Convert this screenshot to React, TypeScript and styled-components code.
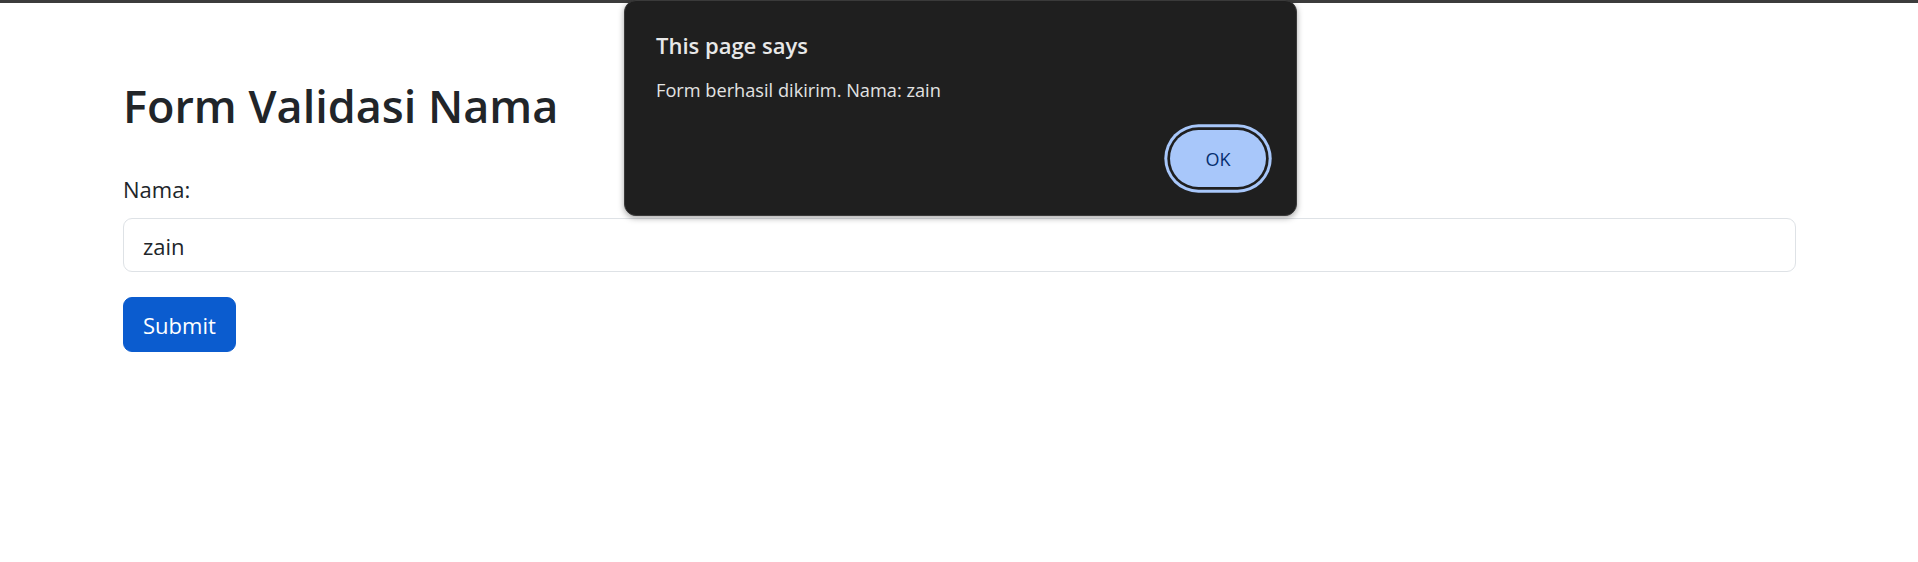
import styled, { createGlobalStyle } from "styled-components";

const GlobalStyle = createGlobalStyle`
  html, body {
    margin: 0;
    padding: 0;
    background: #ffffff;
  }
  body {
    font-family: "Open Sans", "Liberation Sans", sans-serif;
    color: #212529;
  }
`;

const Page = styled.div`
  position: relative;
  width: 1918px;
  height: 562px;
  overflow: hidden;
  background: #ffffff;
`;

const TopStrip = styled.div`
  height: 3px;
  background: #3c3c3c;
`;

const Wrapper = styled.div`
  padding: 76px 122px 0 123px;
`;

const Title = styled.h1`
  margin: 0 0 40px;
  font-size: 45px;
  font-weight: 600;
  line-height: 1.2;
  color: #212529;
`;

const Form = styled.form`
  display: flex;
  flex-direction: column;
  align-items: flex-start;
`;

const Label = styled.label`
  font-size: 22px;
  line-height: 1.5;
  margin-bottom: 12px;
`;

const Input = styled.input`
  box-sizing: border-box;
  width: 100%;
  height: 54px;
  padding: 2px 19px 0;
  font-family: inherit;
  font-size: 22px;
  color: #212529;
  background: #ffffff;
  border: 1px solid #dee2e6;
  border-radius: 9px;
  outline: none;
`;

const SubmitButton = styled.button`
  box-sizing: border-box;
  height: 55px;
  margin-top: 25px;
  padding: 1px 19px 0;
  font-family: inherit;
  font-size: 22px;
  color: #ffffff;
  background: #0b5ccf;
  border: 1px solid #0b5ccf;
  border-radius: 9px;
`;

const Dialog = styled.div`
  position: absolute;
  top: 0;
  left: 624px;
  width: 673px;
  box-sizing: border-box;
  padding: 31px 30px 28px 31px;
  background: #1f1f1f;
  border: 1px solid #3a3a3a;
  border-radius: 12px;
  box-shadow: 0 2px 6px rgba(0, 0, 0, 0.35);
  color: #e3e3e3;
`;

const DialogTitle = styled.div`
  font-size: 22px;
  font-weight: 600;
  line-height: 27px;
  color: #e8e8e8;
`;

const DialogMessage = styled.div`
  margin-top: 19px;
  font-size: 18.2px;
  line-height: 25px;
  color: #e3e3e3;
`;

const DialogActions = styled.div`
  display: flex;
  justify-content: flex-end;
  margin-top: 27px;
`;

const OkButton = styled.button`
  width: 96px;
  height: 57px;
  border: none;
  border-radius: 29px;
  background: #a8c7fa;
  color: #062e6f;
  font-family: inherit;
  font-size: 18px;
  font-weight: 500;
  box-shadow: 0 0 0 2.7px #1f1f1f, 0 0 0 5.7px #a8c7fa;
`;

const App = () => (
  <Page>
    <GlobalStyle />
    <TopStrip />
    <Wrapper>
      <Title>Form Validasi Nama</Title>
      <Form onSubmit={(e) => e.preventDefault()}>
        <Label htmlFor="nama">Nama:</Label>
        <Input id="nama" type="text" defaultValue="zain" />
        <SubmitButton type="submit">Submit</SubmitButton>
      </Form>
    </Wrapper>
    <Dialog role="alertdialog">
      <DialogTitle>This page says</DialogTitle>
      <DialogMessage>Form berhasil dikirim. Nama: zain</DialogMessage>
      <DialogActions>
        <OkButton>OK</OkButton>
      </DialogActions>
    </Dialog>
  </Page>
);

export default App;
